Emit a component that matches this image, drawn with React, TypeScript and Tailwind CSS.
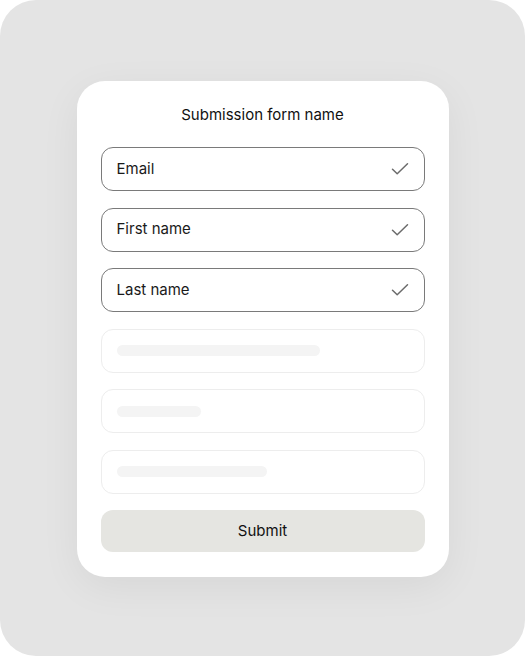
import React from "react";

function Check() {
  return (
    <svg width="18" height="14" viewBox="0 0 18 14" fill="none" className="shrink-0">
      <path d="M1.5 7.2 L6.2 11.8 L16.5 1.8" stroke="#6b6b6b" strokeWidth="1.5" strokeLinecap="round" strokeLinejoin="round" />
    </svg>
  );
}

function Field({ label }: { label: string }) {
  return (
    <div className="flex h-[44px] items-center justify-between rounded-[12px] border border-[#7a7a7a] pl-[15px] pr-[15px]">
      <span className="text-[15px] text-[#1a1a1a]">{label}</span>
      <Check />
    </div>
  );
}

function Skeleton({ w }: { w: string }) {
  return (
    <div className="flex h-[44px] items-center rounded-[12px] border border-[#ededed] pl-[15px]">
      <div className={`h-[11px] rounded-full bg-[#f4f4f4] ${w}`} />
    </div>
  );
}

export default function App() {
  return (
    <div className="h-[656px] w-[525px] bg-white" style={{ fontFamily: "Inter, 'Liberation Sans', sans-serif" }}>
      <div className="flex h-full w-full items-start justify-center rounded-[36px] bg-[#e4e4e4] pt-[81px]">
        <div className="w-[372px] rounded-[28px] bg-white px-[24px] pb-[25px] pt-[24px] shadow-[0_10px_40px_rgba(0,0,0,0.06)]">
          <div className="mb-[22px] text-center text-[15px] leading-[20px] text-[#111]">Submission form name</div>
          <div className="flex flex-col gap-[16.5px]">
            <Field label="Email" />
            <Field label="First name" />
            <Field label="Last name" />
            <Skeleton w="w-[203px]" />
            <Skeleton w="w-[84px]" />
            <Skeleton w="w-[150px]" />
            <button className="h-[42px] rounded-[12px] bg-[#e5e5e1] text-[15px] text-[#111]">Submit</button>
          </div>
        </div>
      </div>
    </div>
  );
}
